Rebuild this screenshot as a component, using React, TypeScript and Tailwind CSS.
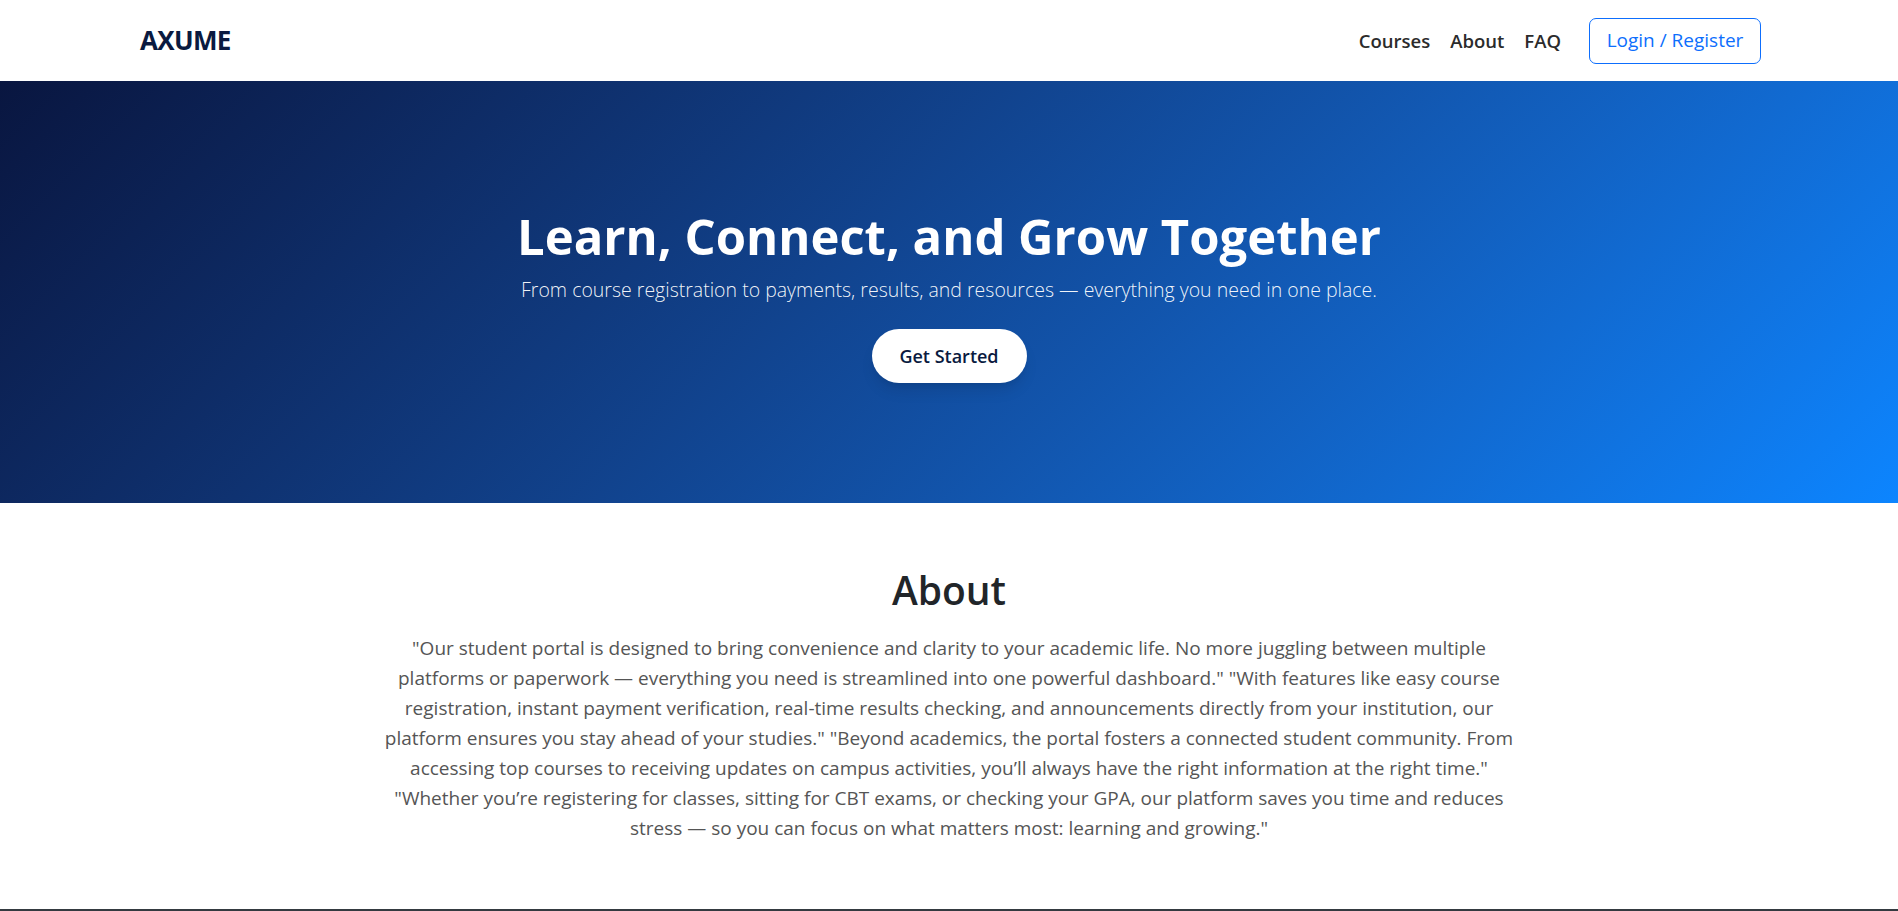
const navLinks = ['Courses', 'About', 'FAQ'];

const aboutText =
  '"Our student portal is designed to bring convenience and clarity to your academic life. No more juggling between multiple platforms or paperwork — everything you need is streamlined into one powerful dashboard." "With features like easy course registration, instant payment verification, real-time results checking, and announcements directly from your institution, our platform ensures you stay ahead of your studies." "Beyond academics, the portal fosters a connected student community. From accessing top courses to receiving updates on campus activities, you’ll always have the right information at the right time." "Whether you’re registering for classes, sitting for CBT exams, or checking your GPA, our platform saves you time and reduces stress — so you can focus on what matters most: learning and growing."';

function Navbar() {
  return (
    <nav className="flex h-[81px] items-center justify-between bg-white pr-[137px] pl-[140px]">
      <a href="#" className="text-[26px] font-bold tracking-tight text-[#0a1a40]">
        AXUME
      </a>
      <div className="flex items-center">
        <ul className="flex items-center gap-[20px]">
          {navLinks.map((l) => (
            <li key={l}>
              <a href="#" className="text-[18.5px] font-semibold text-[#2b2b2b]">
                {l}
              </a>
            </li>
          ))}
        </ul>
        <button className="ml-[28px] h-[46px] w-[172px] rounded-[7px] border border-[#0d6efd] text-[19px] text-[#0d6efd]">
          Login / Register
        </button>
      </div>
    </nav>
  );
}

function Hero() {
  return (
    <section className="flex h-[422px] flex-col items-center justify-center bg-linear-135 from-[#091640] to-[#0c85ff] pt-[6px] text-center text-white">
      <h1 className="text-[49px] leading-[58px] font-bold">Learn, Connect, and Grow Together</h1>
      <p className="mt-[10px] text-[19.5px] leading-[30px] font-light text-white/95">
        From course registration to payments, results, and resources — everything you need in one place.
      </p>
      <button className="mt-[24px] h-[54px] w-[155px] rounded-full bg-white text-[18px] font-semibold text-[#0a1a40] shadow-lg">
        Get Started
      </button>
    </section>
  );
}

function About() {
  return (
    <section className="bg-white pt-[63px] pb-[66px] text-center">
      <h2 className="text-[39px] leading-[48px] font-semibold text-[#212529]">About</h2>
      <p className="mx-auto mt-[19px] max-w-[1152px] text-[19px] leading-[30px] text-[#555]">{aboutText}</p>
    </section>
  );
}

export default function App() {
  return (
    <div className="min-h-screen bg-white font-['Open_Sans',sans-serif]">
      <Navbar />
      <Hero />
      <About />
      <footer className="h-[80px] bg-[#343a40]" />
    </div>
  );
}
